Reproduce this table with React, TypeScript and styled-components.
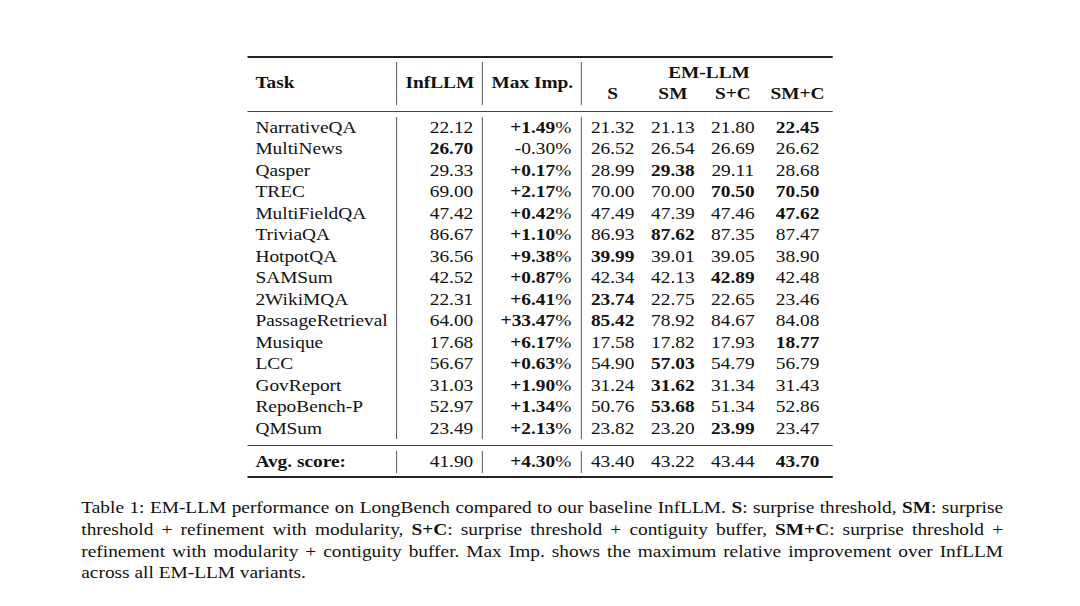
import React from "react";
import styled, { createGlobalStyle } from "styled-components";

const GlobalStyle = createGlobalStyle`
  html, body {
    margin: 0;
    background: #fff;
  }
  body {
    font-family: "Liberation Serif", "Times New Roman", serif;
    color: #111;
  }
`;

// column widths, before the page is stretched horizontally
const COLS = "136.4px 78.2px 90px 55px 54.5px 54.5px 63.2px";

const Page = styled.div`
  width: 981.8px;
  height: 606px;
  box-sizing: border-box;
  padding-top: 56px;
  display: flex;
  flex-direction: column;
  align-items: center;
  font-size: 17.6px;
  line-height: 21.5px;
  transform: scaleX(1.1);
  transform-origin: 0 0;
`;

const Table = styled.div`
  width: 532px;
  border-top: 2px solid #222;
  border-bottom: 2px solid #222;
`;

const Head = styled.div`
  display: grid;
  grid-template-columns: ${COLS};
  grid-template-rows: 21.5px 21.5px;
  padding: 3.5px 0 6px;
  border-bottom: 1px solid #444;
  font-weight: bold;
`;

const Body = styled.div<{ $foot?: boolean }>`
  padding: ${(p) => (p.$foot ? "5.5px 0 3.5px" : "5px 0 5.5px")};
  border-bottom: ${(p) => (p.$foot ? "none" : "1px solid #444")};
`;

const Row = styled.div`
  display: grid;
  grid-template-columns: ${COLS};
  height: 21.5px;
`;

const Cell = styled.div<{
  $align?: "left" | "right" | "center";
  $pad?: number;
  $rule?: boolean;
  $bold?: boolean;
}>`
  text-align: ${(p) => p.$align || "center"};
  padding: ${(p) =>
    p.$align === "left"
      ? `0 0 0 ${p.$pad ?? 7.3}px`
      : p.$align === "right"
      ? `0 ${p.$pad ?? 8.2}px 0 0`
      : "0"};
  border-right: ${(p) => (p.$rule ? "1px solid #666" : "none")};
  font-weight: ${(p) => (p.$bold ? "bold" : "normal")};
  white-space: nowrap;
`;

const HeadCell = styled(Cell)<{ $span?: boolean }>`
  font-weight: bold;
  grid-row: ${(p) => (p.$span ? "1 / span 2" : "auto")};
  display: flex;
  align-items: center;
  justify-content: ${(p) => (p.$align === "left" ? "flex-start" : "center")};
`;

const GroupTitle = styled.div`
  grid-column: 4 / span 4;
  grid-row: 1;
  text-align: center;
  padding-left: 3px;
`;

const Sub = styled.div`
  grid-row: 2;
  text-align: center;
`;

const Num = styled.span<{ $bold?: boolean }>`
  font-weight: ${(p) => (p.$bold ? "bold" : "normal")};
`;

const Pct = styled.span`
  font-weight: normal;
`;

const Caption = styled.div`
  width: 838px;
  margin: 19px 0 0 4px;
  line-height: 21.8px;
`;

const Line = styled.div<{ $last?: boolean }>`
  text-align: justify;
  text-align-last: ${(p) => (p.$last ? "left" : "justify")};
`;

type Entry = [string, string, string, string[]];

// a leading "*" marks a bold value
const rows: Entry[] = [
  ["NarrativeQA", "22.12", "*+1.49", ["21.32", "21.13", "21.80", "*22.45"]],
  ["MultiNews", "*26.70", "-0.30", ["26.52", "26.54", "26.69", "26.62"]],
  ["Qasper", "29.33", "*+0.17", ["28.99", "*29.38", "29.11", "28.68"]],
  ["TREC", "69.00", "*+2.17", ["70.00", "70.00", "*70.50", "*70.50"]],
  ["MultiFieldQA", "47.42", "*+0.42", ["47.49", "47.39", "47.46", "*47.62"]],
  ["TriviaQA", "86.67", "*+1.10", ["86.93", "*87.62", "87.35", "87.47"]],
  ["HotpotQA", "36.56", "*+9.38", ["*39.99", "39.01", "39.05", "38.90"]],
  ["SAMSum", "42.52", "*+0.87", ["42.34", "42.13", "*42.89", "42.48"]],
  ["2WikiMQA", "22.31", "*+6.41", ["*23.74", "22.75", "22.65", "23.46"]],
  ["PassageRetrieval", "64.00", "*+33.47", ["*85.42", "78.92", "84.67", "84.08"]],
  ["Musique", "17.68", "*+6.17", ["17.58", "17.82", "17.93", "*18.77"]],
  ["LCC", "56.67", "*+0.63", ["54.90", "*57.03", "54.79", "56.79"]],
  ["GovReport", "31.03", "*+1.90", ["31.24", "*31.62", "31.34", "31.43"]],
  ["RepoBench-P", "52.97", "*+1.34", ["50.76", "*53.68", "51.34", "52.86"]],
  ["QMSum", "23.49", "*+2.13", ["23.82", "23.20", "*23.99", "23.47"]],
];

const avg: Entry = ["Avg. score:", "41.90", "*+4.30", ["43.40", "43.22", "43.44", "*43.70"]];

const Value: React.FC<{ v: string }> = ({ v }) => (
  <Num $bold={v.startsWith("*")}>{v.replace("*", "")}</Num>
);

const DataRow: React.FC<{ entry: Entry; boldTask?: boolean }> = ({ entry, boldTask }) => {
  const [task, inf, imp, em] = entry;
  return (
    <Row>
      <Cell $align="left" $rule $bold={boldTask}>
        {task}
      </Cell>
      <Cell $align="right" $rule>
        <Value v={inf} />
      </Cell>
      <Cell $align="right" $pad={9.1} $rule>
        <Value v={imp} />
        <Pct>%</Pct>
      </Cell>
      {em.map((v, i) => (
        <Cell key={i}>
          <Value v={v} />
        </Cell>
      ))}
    </Row>
  );
};

export default function App() {
  return (
    <>
      <GlobalStyle />
      <Page>
        <Table>
          <Head>
            <HeadCell $align="left" $rule $span>
              Task
            </HeadCell>
            <HeadCell $rule $span>
              InfLLM
            </HeadCell>
            <HeadCell $rule $span>
              Max Imp.
            </HeadCell>
            <GroupTitle>EM-LLM</GroupTitle>
            <Sub>S</Sub>
            <Sub>SM</Sub>
            <Sub>S+C</Sub>
            <Sub>SM+C</Sub>
          </Head>
          <Body>
            {rows.map((r) => (
              <DataRow key={r[0]} entry={r} />
            ))}
          </Body>
          <Body $foot>
            <DataRow entry={avg} boldTask />
          </Body>
        </Table>
        <Caption>
          <Line>
            Table 1: EM-LLM performance on LongBench compared to our baseline InfLLM.{" "}
            <b>S</b>: surprise threshold, <b>SM</b>: surprise
          </Line>
          <Line>
            threshold + refinement with modularity, <b>S+C</b>: surprise threshold + contiguity
            buffer, <b>SM+C</b>: surprise threshold +
          </Line>
          <Line>
            refinement with modularity + contiguity buffer. Max Imp. shows the maximum relative
            improvement over InfLLM
          </Line>
          <Line $last>across all EM-LLM variants.</Line>
        </Caption>
      </Page>
    </>
  );
}
